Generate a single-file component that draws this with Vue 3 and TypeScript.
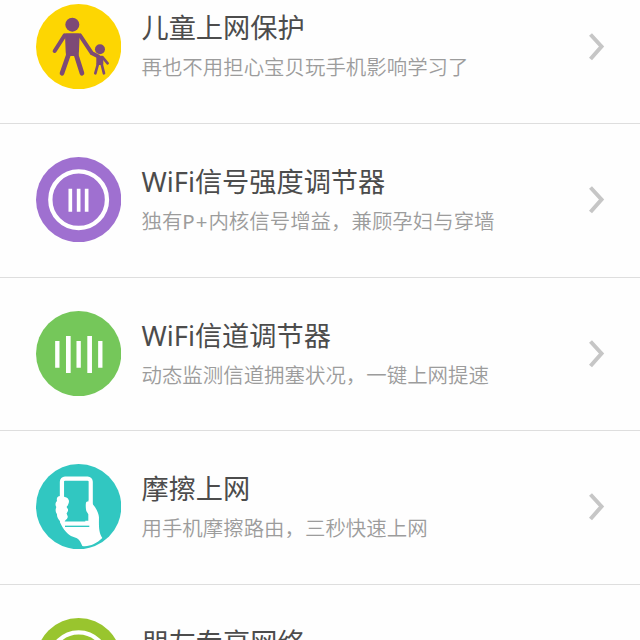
<script setup lang="ts">
type IconName = 'family' | 'signal' | 'channel' | 'touch' | 'friends'

interface Feature {
  icon: IconName
  title: string
  description: string
}

const features: Feature[] = [
  { icon: 'family', title: '儿童上网保护', description: '再也不用担心宝贝玩手机影响学习了' },
  { icon: 'signal', title: 'WiFi信号强度调节器', description: '独有P+内核信号增益，兼顾孕妇与穿墙' },
  { icon: 'channel', title: 'WiFi信道调节器', description: '动态监测信道拥塞状况，一键上网提速' },
  { icon: 'touch', title: '摩擦上网', description: '用手机摩擦路由，三秒快速上网' },
  { icon: 'friends', title: '朋友专享网络', description: '' },
]

// Separates Latin runs so they can be spaced independently of the Chinese text.
const runs = (text: string): string[] => text.split(/([A-Z+]+)/).filter(Boolean)
const isLatin = (text: string): boolean => /^[A-Z+]+$/.test(text)
</script>

<template>
  <main class="screen">
    <ul class="list">
      <li v-for="item in features" :key="item.icon" class="row">
        <svg v-if="item.icon === 'family'" class="icon" viewBox="30 10 256 256">
          <circle cx="158" cy="138" r="128" fill="#fdd602" />
          <g fill="#7d4a76" stroke="#7d4a76" stroke-linecap="round" stroke-linejoin="round">
            <circle cx="139" cy="72" r="21" stroke="none" />
            <path d="M121 102H157L155 152L154 162H124L123 152Z" stroke-width="8" />
            <path d="M116 104L86 151M162 104L198 158L216 167" fill="none" stroke-width="12" />
            <path d="M129 158L108 218M149 158L168 218" fill="none" stroke-width="14" />
            <circle cx="222" cy="146" r="15" stroke="none" />
            <path d="M214 168H229V190H214Z" stroke-width="6" />
            <path d="M230 170L245 188M216 190L208 218M227 190L234 218" fill="none" stroke-width="8" />
          </g>
        </svg>
        <svg v-else-if="item.icon === 'signal'" class="icon" viewBox="30 21 256 256">
          <circle cx="158" cy="149" r="128" fill="#9f70d0" />
          <circle cx="158" cy="149" r="85" fill="none" stroke="#fff" stroke-width="13" />
          <path d="M133 116V185M158 116V185M182 116V185" fill="none" stroke="#fff" stroke-width="11" />
        </svg>
        <svg v-else-if="item.icon === 'channel'" class="icon" viewBox="30 19 256 256">
          <circle cx="158" cy="147" r="128" fill="#75c75a" />
          <path d="M94 109V189M158 109V189M223 109V189" fill="none" stroke="#fff" stroke-width="13" />
          <path d="M127 94V205M191 94V205" fill="none" stroke="#fff" stroke-width="14" />
        </svg>
        <svg v-else-if="item.icon === 'touch'" class="icon" viewBox="30 24 256 256">
          <circle cx="158" cy="152" r="128" fill="#31c7c1" />
          <path d="M103 120C94 120 91 127 93 135C88 140 87 147 91 153C88 160 88 169 93 174C92 183 97 190 102 195C107 215 120 230 135 240L153 247C162 252 164 260 169 270C190 273 211 263 229 246C217 229 219 206 219 184C218 168 204 145 191 136L178 137V198H115L119 192C126 188 128 180 122 173C128 166 128 158 122 153C130 145 132 128 124 124L112 121Z" fill="#fff" />
          <rect x="108" y="68" width="86" height="135" rx="9" fill="none" stroke="#fff" stroke-width="13" />
          <path d="M115 75H187V132C177 137 178 150 181 165L187 175V194H121C127 189 128 180 122 173C128 166 128 158 122 153C132 145 132 128 120 124L115 123Z" fill="#31c7c1" />
          <path d="M117 211H190" fill="none" stroke="#31c7c1" stroke-width="4" />
        </svg>
        <svg v-else class="icon" viewBox="30 21 256 256">
          <circle cx="158" cy="149" r="128" fill="#99c52e" />
          <circle cx="158" cy="149" r="85" fill="none" stroke="#fff" stroke-width="13" />
        </svg>
        <div class="copy">
          <h2 class="title">{{ item.title }}</h2>
          <p class="description">
            <span v-for="run in runs(item.description)" :key="run" :class="{ latin: isLatin(run) }">{{ run }}</span>
          </p>
        </div>
        <svg class="chevron" viewBox="0 0 18 30">
          <path d="M2.5 2.5L13.5 14.5L2.5 27" fill="none" stroke="#c6c6c6" stroke-width="4" />
        </svg>
      </li>
    </ul>
  </main>
</template>

<style>
body {
  margin: 0;
  background: #fefefe;
}
</style>

<style scoped>
.screen {
  width: 640px;
  height: 640px;
  overflow: hidden;
  background: #fefefe;
  font-family: "Noto Sans", "Noto Sans CJK SC", sans-serif;
}

.list {
  margin: -29.6px 0 0;
  padding: 0;
  list-style: none;
}

.row {
  display: flex;
  align-items: center;
  box-sizing: border-box;
  height: 153.55px;
  padding: 0 34px 0 36px;
  border-bottom: 1px solid #dedede;
}

.icon {
  flex: none;
  width: 85.3px;
  height: 85.3px;
  margin-top: -1px;
}

.copy {
  flex: 1;
  height: 86.4px;
  margin-left: 20.2px;
}

.title,
.description {
  margin: 0;
  white-space: nowrap;
}

.title {
  color: #4c4c4c;
  font-size: 27.2px;
  font-weight: 400;
  line-height: 50px;
}

.description {
  color: #9c9c9c;
  font-size: 20.45px;
  font-weight: 350;
  line-height: 29px;
}

.latin {
  font-weight: 400;
  letter-spacing: 1px;
}

.chevron {
  flex: none;
  width: 18px;
  height: 30px;
}
</style>
